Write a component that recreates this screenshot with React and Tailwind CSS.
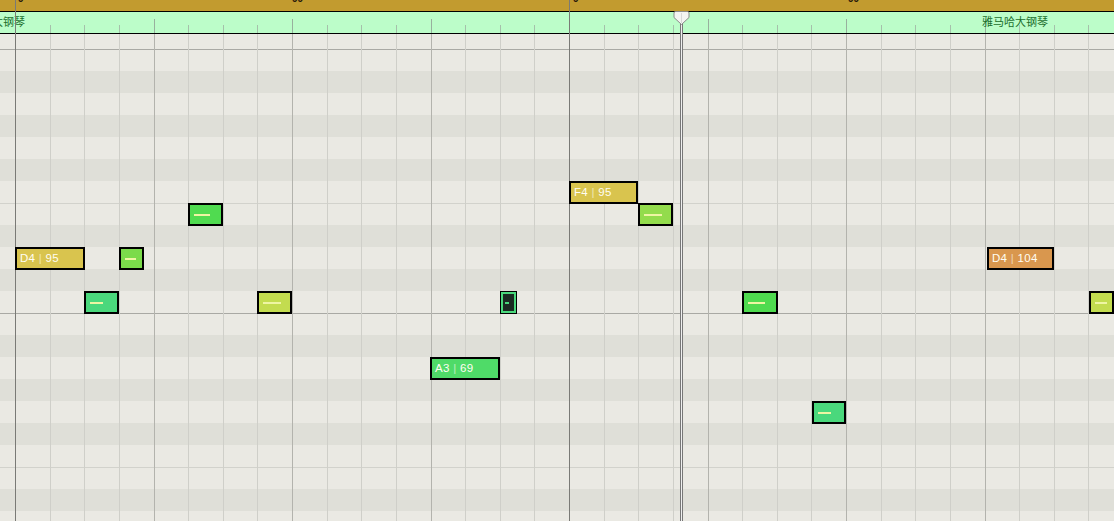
import React from 'react';

const BAR_START = 15;
const SUB = 554 / 16;
const BLACK_KEYS = [1, 3, 6, 8, 10];

const gridLines = Array.from({ length: 32 }, (_, i) => ({
    x: Math.round(BAR_START + i * SUB),
    kind: i % 16 === 0 ? 'bar' : i % 4 === 0 ? 'beat' : 'sub',
})).filter(l => l.x < 1114);

const pitches = Array.from({ length: 23 }, (_, i) => 72 - i);
const rowTop = (p) => 247 - (p - 62) * 22;

const notes = [
    { x: 15, w: 70, p: 62, color: 'bg-[#d9c44e]', label: 'D4', vel: 95 },
    { x: 119, w: 25, p: 62, color: 'bg-[#7bdb4b]', dash: 11 },
    { x: 188, w: 35, p: 64, color: 'bg-[#50db50]', dash: 16 },
    { x: 84, w: 35, p: 60, color: 'bg-[#4ad87c]', dash: 13 },
    { x: 257, w: 35, p: 60, color: 'bg-[#c3dc4f]', dash: 18 },
    { x: 430, w: 70, p: 57, color: 'bg-[#4fdb68]', label: 'A3', vel: 69 },
    { x: 569, w: 69, p: 65, color: 'bg-[#d9c44e]', label: 'F4', vel: 95 },
    { x: 638, w: 35, p: 64, color: 'bg-[#93dc4c]', dash: 18 },
    { x: 742, w: 36, p: 60, color: 'bg-[#4fdb4f]', dash: 17 },
    { x: 812, w: 34, p: 55, color: 'bg-[#4ad87c]', dash: 13 },
    { x: 987, w: 67, p: 62, color: 'bg-[#d9974e]', label: 'D4', vel: 104 },
    { x: 1089, w: 25, p: 60, color: 'bg-[#c3dc4f]', dash: 12 },
];

const lineColor = {
    bar: 'bg-[#7a7a76]',
    beat: 'bg-[#b3b3ad]',
    sub: 'bg-[#cfcfc9]',
};

const GridRow = ({ pitch, first }) => {
    const pc = pitch % 12;
    const black = BLACK_KEYS.includes(pc);
    let border = '';
    if (!first && pc === 11) border = 'border-t border-[#a9a9a4]';
    if (!first && pc === 4) border = 'border-t border-[#d2d2cc]';
    return (
        <div
            className={`shrink-0 ${first ? 'h-[15px]' : 'h-[22px]'} ${black ? 'bg-[#dfdfd8]' : 'bg-[#eae9e3]'} ${border}`}
        />
    );
};

const Note = ({ note }) => (
    <div
        className={`absolute h-[23px] border-2 border-black ${note.color} flex items-center pl-[3px] overflow-hidden`}
        style={{ left: note.x, top: rowTop(note.p), width: note.w }}
    >
        {note.label ? (
            <span className="text-[11.5px] leading-none text-[#fffdf2] whitespace-nowrap tracking-[0.3px]">
                {note.label} <span className="opacity-60">|</span> {note.vel}
            </span>
        ) : (
            <span className="h-[2px] ml-[1px] bg-[#eef5a3]" style={{ width: note.dash }} />
        )}
    </div>
);

const App = () => {
    return (
        <div className="relative w-[1114px] h-[521px] overflow-hidden bg-[#eae9e3] font-['Liberation_Sans',_sans-serif] flex flex-col">
            {/* arrangement strip, labels scrolled mostly out of view */}
            <div className="relative h-[11px] shrink-0 bg-[#c29b2f] overflow-hidden">
                {[18, 292, 573, 848].map((x, i) => (
                    <span
                        key={x}
                        className="absolute top-[-6px] text-[10px] leading-[10px] font-bold text-[#1c1408]"
                        style={{ left: x }}
                    >
                        {i % 2 === 0 ? '9' : '99'}
                    </span>
                ))}
            </div>
            <div className="h-px shrink-0 bg-black" />

            {/* clip header */}
            <div className="relative h-[21px] shrink-0 bg-[#bcfdc9] overflow-hidden">
                {gridLines.map(l => (
                    <div
                        key={l.x}
                        className={`absolute bottom-0 w-px ${
                            l.kind === 'bar' ? 'top-0 bg-[#6f7f73]' : l.kind === 'beat' ? 'top-[7px] bg-[#98b09e]' : 'top-[13px] bg-[#a5c0aa]'
                        }`}
                        style={{ left: l.x }}
                    />
                ))}
                <span className="absolute left-[-41px] top-[1px] text-[11px] leading-[16px] text-[#1b6e2c] font-['Noto_Sans_CJK_SC',_sans-serif] whitespace-nowrap">
                    雅马哈大钢琴
                </span>
                <span className="absolute left-[982px] top-[1px] text-[11px] leading-[16px] text-[#1b6e2c] font-['Noto_Sans_CJK_SC',_sans-serif] whitespace-nowrap">
                    雅马哈大钢琴
                </span>
            </div>
            <div className="h-px shrink-0 bg-black" />

            {/* piano roll rows */}
            <div className="relative flex-1 flex flex-col">
                {pitches.map((p, i) => (
                    <GridRow key={p} pitch={p} first={i === 0} />
                ))}
            </div>

            {/* timeline canvas: grid lines, notes, playhead */}
            <div className="absolute inset-0 pointer-events-none">
                {gridLines.map(l => (
                    <div
                        key={l.x}
                        className={`absolute w-px bottom-0 ${lineColor[l.kind]} ${l.kind === 'bar' ? 'top-0' : 'top-[34px]'}`}
                        style={{ left: l.x }}
                    />
                ))}
                {notes.map((n, i) => (
                    <Note key={i} note={n} />
                ))}

                {/* selected note */}
                <div className="absolute left-[500px] top-[291px] w-[17px] h-[23px] border-[1.5px] border-black">
                    <div className="w-full h-full border-2 border-[#4ad87c] bg-[#1b2a22] flex items-center pl-[2px]">
                        <span className="w-[4px] h-[2px] bg-[#4ad87c]" />
                    </div>
                </div>

                {/* playhead */}
                <div className="absolute left-[680px] top-[20px] bottom-0 w-px bg-[#777]" />
                <div className="absolute left-[681px] top-[20px] bottom-0 w-px bg-[#efefef]" />
                <div className="absolute left-[682px] top-[20px] bottom-0 w-px bg-[#777]" />
                <svg className="absolute left-[673px] top-[11px]" width="17" height="15" viewBox="0 0 17 15">
                    <path
                        d="M2.5 0.5 H14.5 Q16 0.5 16 2 V6.5 L8.5 13.5 L1 6.5 V2 Q1 0.5 2.5 0.5 Z"
                        fill="#f4f4f2"
                        stroke="#8a8a8a"
                        strokeWidth="1"
                    />
                    <line x1="8.5" y1="2" x2="8.5" y2="12" stroke="#d8d8d8" strokeWidth="1" />
                </svg>
            </div>
        </div>
    );
};

export default App;
